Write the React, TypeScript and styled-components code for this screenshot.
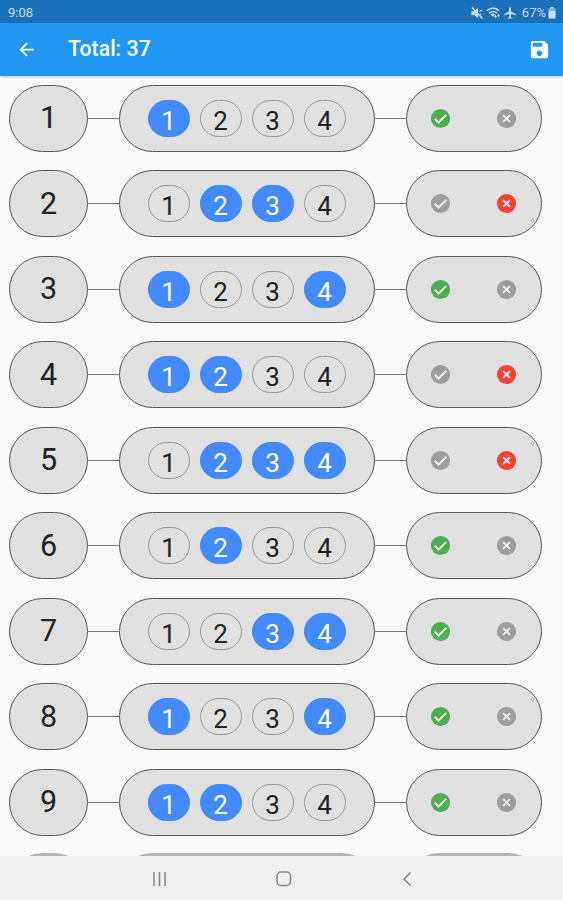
import React from "react";
import styled, { createGlobalStyle } from "styled-components";
import { MdAirplanemodeActive, MdArrowBack, MdSave } from "react-icons/md";

const GlobalStyle = createGlobalStyle`
  body {
    margin: 0;
    font-family: Roboto, sans-serif;
    background: #fafafa;
  }
`

const Screen = styled.div`
  display: flex;
  flex-direction: column;
  height: 900px;
  overflow: hidden;
`

const StatusBar = styled.div`
  display: flex;
  flex: none;
  align-items: center;
  justify-content: space-between;
  box-sizing: border-box;
  height: 23px;
  padding: 2px 7px 0 8px;
  background: #1a70b8;
  color: #c9def0;
  font-size: 13px;
`

const StatusIcons = styled.div`
  display: flex;
  align-items: center;
  gap: 2px;
`

const BatteryLevel = styled.span`
  margin-left: 3px;
`

const AppBar = styled.header`
  display: flex;
  flex: none;
  align-items: center;
  box-sizing: border-box;
  height: 53px;
  padding: 0 12px 1px 16px;
  background: #2196f3;
  color: #fff;
  z-index: 1;
  box-shadow: 0 1px 3px rgba(0, 0, 0, 0.2);
`

const Title = styled.h1`
  flex: 1;
  margin: 0 0 0 31px;
  font-size: 21.3px;
  font-weight: 500;
  line-height: 26px;
`

const List = styled.main`
  flex: 1;
  min-height: 0;
  overflow: hidden;
  padding: 8.6px 0 0 9px;
`

const Row = styled.div`
  display: flex;
  align-items: center;
  height: 67px;
  margin-bottom: 18.5px;
`

const Pill = styled.div<{ $width: number }>`
  display: flex;
  align-items: center;
  justify-content: center;
  box-sizing: border-box;
  flex: none;
  width: ${({ $width }) => $width}px;
  height: 67px;
  border: 1px solid #555;
  border-radius: 34px;
  background: #e0e0e0;
`

const NextRow = styled(Row)`
  margin-top: -1px;

  ${Pill} {
    border: 3px solid #b4b4b4;
  }
`

const Gap = styled.div`
  width: 31px;
`

const Connector = styled(Gap)`
  height: 1px;
  background: #777;
`

const QuestionNumber = styled.span`
  color: #222;
  font-size: 30.5px;
  line-height: 36px;
`

const Options = styled(Pill)`
  justify-content: flex-start;
  gap: 10px;
  padding-left: 27.6px;
`

const Option = styled.span<{ $selected: boolean }>`
  box-sizing: border-box;
  width: 42px;
  height: 37px;
  padding-top: 3px;
  border: 1px solid ${({ $selected }) => ($selected ? "#448aff" : "#999")};
  border-radius: 19px;
  background: ${({ $selected }) => ($selected ? "#448aff" : "transparent")};
  color: ${({ $selected }) => ($selected ? "#fff" : "#222")};
  font-size: 26px;
  line-height: 34px;
  text-align: center;
`

const Verdict = styled(Pill)`
  justify-content: space-between;
  padding: 0 22.5px 0 21.5px;
`

const NavBar = styled.nav`
  display: flex;
  flex: none;
  align-items: center;
  box-sizing: border-box;
  height: 44px;
  padding: 2px 0 0 152px;
  gap: 108px;
  background: #f0f0f0;
  color: #858585;
`

const CheckIcon = ({ color }: { color: string }) => (
    <svg width="23" height="23" viewBox="0 0 24 24" fill="none">
        <circle cx="12" cy="12" r="10" fill={color}/>
        <path d="M6 12.2l4 4 8-8" stroke="#ececec" strokeWidth="2.1"/>
    </svg>
)

const CrossIcon = ({ color }: { color: string }) => (
    <svg width="23" height="23" viewBox="0 0 24 24">
        <circle cx="12" cy="12" r="10" fill={color}/>
        <path d="M8.5 8.5l7 7M15.5 8.5l-7 7" stroke="#ececec" strokeWidth="2.1"/>
    </svg>
)

const MuteIcon = () => (
    <svg width="14" height="14" viewBox="0 0 14 14" fill="currentColor">
        <path d="M1.5 5h2.8L8 2v10L4.3 9H1.5z"/>
        <path d="M9.5 5.5L12 4M9.5 8.2h2" stroke="currentColor" strokeWidth="1.1"/>
        <path d="M2 1.5l10.5 11" stroke="currentColor" strokeWidth="1.5"/>
    </svg>
)

const WifiIcon = () => (
    <svg width="15" height="14" viewBox="0 0 15 14" fill="none" stroke="currentColor">
        <path d="M1 4.6Q7 0 13 4.6M3 7Q7 4 11 7" strokeWidth="1.6"/>
        <path d="M4.6 8.5Q7 6.8 9 8.4L7 10.8z" fill="currentColor" stroke="none"/>
        <path d="M9.5 8.5v3M8.3 10.3l1.2 1.4 1.2-1.4M12.5 11.5v-3M11.3 9.7l1.2-1.4 1.2 1.4" strokeWidth="0.9"/>
    </svg>
)

const BatteryIcon = () => (
    <svg width="8" height="12" viewBox="0 0 8 12" fill="currentColor">
        <path d="M2.5 0h3v1.5h-3z"/>
        <path d="M0.5 1.2h7V4h-7z" opacity="0.6"/>
        <path d="M0.5 4h7v7.5h-7z"/>
    </svg>
)

const questions = [
    { selected: [1], correct: true },
    { selected: [2, 3], correct: false },
    { selected: [1, 4], correct: true },
    { selected: [1, 2], correct: false },
    { selected: [2, 3, 4], correct: false },
    { selected: [2], correct: true },
    { selected: [3, 4], correct: true },
    { selected: [1, 4], correct: true },
    { selected: [1, 2], correct: true },
]

export default function App() {
    return (
        <Screen>
            <GlobalStyle/>
            <StatusBar>
                <span>9:08</span>
                <StatusIcons>
                    <MuteIcon/>
                    <WifiIcon/>
                    <MdAirplanemodeActive size={14}/>
                    <BatteryLevel>67%</BatteryLevel>
                    <BatteryIcon/>
                </StatusIcons>
            </StatusBar>
            <AppBar>
                <MdArrowBack size={21}/>
                <Title>Total: 37</Title>
                <MdSave size={23}/>
            </AppBar>
            <List>
                {questions.map(({ selected, correct }, index) => (
                    <Row key={index}>
                        <Pill $width={79}>
                            <QuestionNumber>{index + 1}</QuestionNumber>
                        </Pill>
                        <Connector/>
                        <Options $width={256}>
                            {[1, 2, 3, 4].map((option) => (
                                <Option key={option} $selected={selected.includes(option)}>{option}</Option>
                            ))}
                        </Options>
                        <Connector/>
                        <Verdict $width={135.5}>
                            <CheckIcon color={correct ? "#4caf50" : "#9e9e9e"}/>
                            <CrossIcon color={correct ? "#9e9e9e" : "#f44336"}/>
                        </Verdict>
                    </Row>
                ))}
                {/* only the top edge of the next row is above the nav bar */}
                <NextRow>
                    <Pill $width={79}/>
                    <Gap/>
                    <Pill $width={256}/>
                    <Gap/>
                    <Pill $width={135.5}/>
                </NextRow>
            </List>
            <NavBar>
                <svg width="16" height="16" viewBox="0 0 16 16" fill="none" stroke="currentColor" strokeWidth="1.5">
                    <path d="M2 1v14M7.5 1v14M13 1v14"/>
                </svg>
                <svg width="16" height="16" viewBox="0 0 16 16" fill="none" stroke="currentColor" strokeWidth="1.5">
                    <rect x="1" y="1" width="13.5" height="13.5" rx="4"/>
                </svg>
                <svg width="16" height="16" viewBox="0 0 16 16" fill="none" stroke="currentColor" strokeWidth="1.5">
                    <path d="M10.5 1.5L4 8l6.5 6.5"/>
                </svg>
            </NavBar>
        </Screen>
    )
}
